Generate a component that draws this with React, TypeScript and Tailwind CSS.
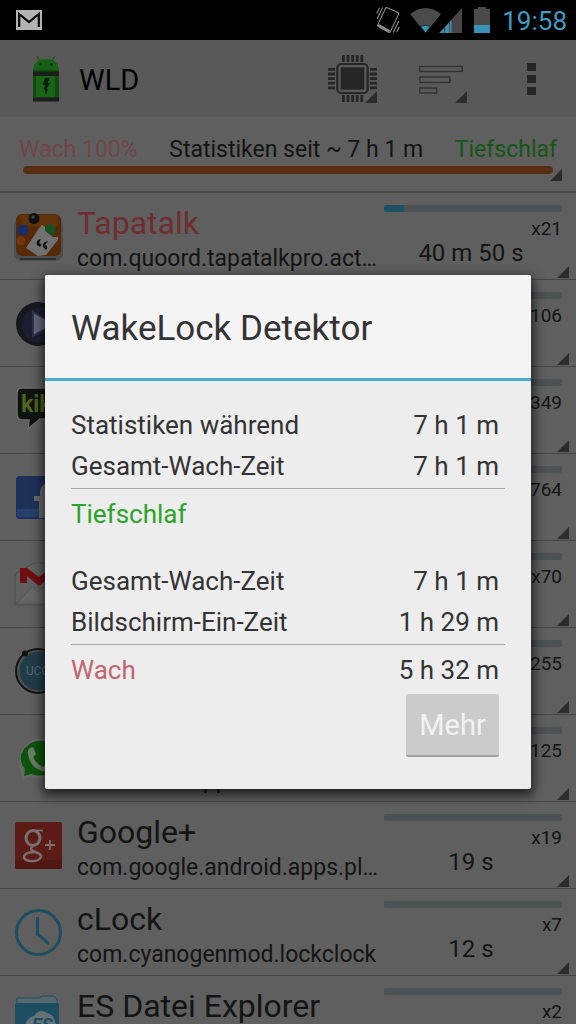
import type { ReactNode } from 'react';

function Corner({ className = '' }: { className?: string }) {
  return (
    <svg viewBox="0 0 12 12" className={`absolute size-3 ${className}`} aria-hidden="true">
      <path d="M12 0V12H0Z" fill="#2c2c2c" />
    </svg>
  );
}

function StatusBar() {
  return (
    <header className="flex h-10 shrink-0 items-center bg-black pl-4 pr-[9px]">
      <svg viewBox="0 0 26 20" className="h-5 w-[26px]">
        <rect width="26" height="20" fill="#b4b4b4" />
        <path d="M3.2 17V4L13 12L22.8 4V17" fill="none" stroke="#000" strokeWidth="2.2" />
      </svg>
      <div className="ml-auto flex items-center">
        <svg viewBox="0 0 24 28" className="mr-2.5 h-7 w-6" fill="none" stroke="#8c8c8c" strokeWidth="1.1">
          <path d="M11.2 1.800L21.800 6.600Q23 7.200 22.500 8.400L14.500 25.400Q13.800 26.800 12.600 26.200L2.400 20.600Q1.300 20 1.800 18.800L9.400 2.600Q10 1.300 11.200 1.800Z" />
          <path d="M2.200 19.200L13.500 25.300" strokeWidth="2.600" />
          <path d="M6.600 1.500L1.200 13M3.400 2L.8 7.500M22.800 15L17.300 26.500M23.200 21L20.800 26" />
        </svg>
        <svg viewBox="0 0 52 25" className="mr-3 h-[25px] w-[52px]">
          <path d="M0 6Q15.500 -6 31 6L15.500 25Z" fill="#4b4b4b" />
          <path d="M10.500 18.600Q15.500 15.800 20.500 18.600L15.500 25Z" fill="#3793b7" stroke="#000" strokeWidth=".6" />
          <path d="M52 0V25H29Z" fill="#4b4547" />
          <path d="M29.500 25L34 20.500V25ZM35.200 19L39 15V25H35.200ZM40 14L41.500 12.200V25H40Z" fill="#3793b7" />
        </svg>
        <svg viewBox="0 0 16 26" className="mr-3 h-[26px] w-4">
          <path d="M0 2H4V0H12V2H16V26H0Z" fill="#4a4a4a" />
          <path d="M0 18H16V26H0Z" fill="#3793b7" />
        </svg>
        <time className="pt-0.5 text-[26px] leading-8 text-[#3c9dc4]">19:58</time>
      </div>
    </header>
  );
}

function ActionBar() {
  return (
    <div className="flex h-[77px] shrink-0 items-center bg-[#595959] pl-[33px] pr-10">
      <svg viewBox="0 0 26 46" className="h-[46px] w-[26px]">
        <path d="M4 0L7 5M22 0L19 5" stroke="#186016" strokeWidth="1.200" />
        <path d="M0 16Q0 3 13 3Q26 3 26 16Z" fill="#186016" />
        <circle cx="7.500" cy="8.500" r="1.200" fill="#0a2b0a" />
        <circle cx="18.500" cy="8.500" r="1.200" fill="#0a2b0a" />
        <rect y="14" width="26" height="31" fill="#124b10" />
        <rect x="3" y="19" width="19" height="22" fill="#1a6317" />
        <rect y="15.500" width="26" height="4.500" fill="#1a1e1a" />
        <rect y="41.500" width="26" height="4" fill="#1a1e1a" />
        <path d="M12 22L17 21.500L14.500 27H17L13.500 33H15L12.500 39L12 33.500H10.500L12.500 29H9.500Z" fill="#0a1c0a" />
      </svg>
      <h1 className="ml-5 pt-0.5 text-[29px] leading-8 text-black">WLD</h1>
      <button type="button" aria-label="CPU" className="relative ml-auto">
        <svg viewBox="0 0 49 48" className="h-12 w-[49px]" fill="#262626">
          <path d="M14 0h2.800v7h-2.800zM18.600 0h2.800v7h-2.800zM23.200 0h2.800v7h-2.800zM27.800 0h2.800v7h-2.800zM32.400 0h2.800v7h-2.800zM14 40h2.800v7h-2.800zM18.600 40h2.800v7h-2.800zM23.200 40h2.800v7h-2.800zM27.800 40h2.800v7h-2.800zM32.400 40h2.800v7h-2.800z" />
          <path d="M0 13h7v2.800h-7zM0 17.600h7v2.800h-7zM0 22.200h7v2.800h-7zM0 26.800h7v2.800h-7zM0 31.400h7v2.800h-7zM42 13h7v2.800h-7zM42 17.600h7v2.800h-7zM42 22.200h7v2.800h-7zM42 26.800h7v2.800h-7zM42 31.400h7v2.800h-7z" />
          <rect x="9.300" y="9" width="30.400" height="29" rx="4" fill="none" stroke="#262626" strokeWidth="2.200" />
          <rect x="12.700" y="12.300" width="23.600" height="22.400" rx="1" />
          <path d="M50 33V50H33Z" fill="#595959" />
        </svg>
        <Corner className="bottom-0 right-0" />
      </button>
      <button type="button" aria-label="Sortieren" className="relative ml-[42px]">
        <svg viewBox="0 0 48 48" className="size-12" fill="none" stroke="#303030" strokeWidth="1.300">
          <rect x=".8" y="11.500" width="42.400" height="5" />
          <rect x=".8" y="22" width="30" height="5.500" />
          <rect x=".8" y="33" width="17" height="5" />
        </svg>
        <Corner className="bottom-0 right-0" />
      </button>
      <button type="button" aria-label="Optionen" className="ml-[60px]">
        <svg viewBox="0 0 9 32" className="h-8 w-[9px]" fill="#262626">
          <path d="M0 0h9v8h-9zM0 12h9v8h-9zM0 24h9v8h-9z" />
        </svg>
      </button>
    </div>
  );
}

function Summary() {
  return (
    <section className="relative h-[76px] shrink-0 border-b-2 border-[#494949] pt-[18px]">
      <div className="flex justify-between px-[19px] text-[23px] leading-[30px]">
        <span className="text-[#704448]">Wach 100%</span>
        <span className="text-[#141414]">Statistiken seit ~ 7 h 1 m</span>
        <span className="text-[#145614]">Tiefschlaf</span>
      </div>
      <div className="mx-[23px] mt-px h-2 rounded-full bg-[#592f14]" />
      <Corner className="bottom-[10px] right-[14px]" />
    </section>
  );
}

const tapatalkIcon = (
  <>
    <rect x="0" y="5" width="49" height="43" rx="8" fill="#4b4f4f" />
    <path d="M6 46H42" stroke="#202424" strokeWidth="1.500" />
    <rect x="2" y="1" width="45" height="42" rx="6" fill="#552a09" />
    <path d="M5 2H44Q46 12 40 16L8 12Z" fill="#6b3c0d" opacity=".6" />
    <circle cx="20" cy="5.500" r="5.500" fill="#111" />
    <circle cx="19" cy="4" r="1.800" fill="#444" />
    <circle cx="9" cy="17" r="5.500" fill="#172f66" />
    <circle cx="36" cy="17" r="5.500" fill="#165022" />
    <circle cx="7" cy="28" r="4.500" fill="#74350f" />
    <path d="M25 15L28 12L31 14L31 18L39 24L44 24L44 27L32 42L24 43L12 35Z" fill="#717171" />
    <path d="M27 26Q21 27 23 32L26 34Q29 31 25 30ZM34 28Q28 29 29 34L32 37Q35 33 31 32Z" fill="#101010" />
  </>
);

const playIcon = (
  <>
    <circle cx="24" cy="24" r="22" fill="#17171e" />
    <circle cx="26" cy="25" r="18" fill="#1e1e32" />
    <path d="M19 12L40 24L19 36Z" fill="#66667a" stroke="#303054" strokeWidth="2" />
  </>
);

const kikIcon = (
  <>
    <path d="M8 1H44Q48 1 48 5V28Q48 32 44 32H26L14 42L15 33H8Q3 32 3 28V6Q3 1 8 1Z" fill="#101411" stroke="#6c6c6c" strokeWidth="1.500" />
    <text x="7" y="25" fontSize="23" fontWeight="700" fill="#4f661c">kik</text>
  </>
);

const facebookIcon = (
  <>
    <rect x="2" y="2" width="45" height="43" rx="4" fill="#1e315a" />
    <path d="M3 35H46V41Q46 43 43 43H5Q2 43 3 35Z" fill="#27406c" />
    <path d="M40 9Q27 7 26 18V22H20V27H25V44H34V28H40V22H34V17Q35 14 40 15Z" fill="#6b6b6b" />
  </>
);

const gmailIcon = (
  <>
    <path d="M1 13L20 2H30L48 13V44H1Z" fill="#606060" stroke="#4c4c4c" />
    <path d="M2 43L18 26L24 31L30 26L47 43Z" fill="#656565" stroke="#555" />
    <path d="M6 7H13L25 16L37 7H43V22H37V15L25 25L13 15V22H6Z" fill="#700d10" />
  </>
);

const ucIcon = (
  <>
    <circle cx="24" cy="23" r="22" fill="#505050" stroke="#141414" strokeWidth="2" />
    <circle cx="25" cy="23" r="19.500" fill="#203c48" />
    <circle cx="11" cy="5.500" r="3" fill="#111" />
    <text x="12" y="27" fontSize="12" fill="#526a74">UCCW</text>
  </>
);

const whatsappIcon = (
  <>
    <path d="M8 46L7 36Q2 23 10 11Q18 2 31 4Q45 7 47 22Q47 35 36 41Q26 46 16 41Z" fill="#686868" />
    <path d="M10 41L11 34Q3 24 10 14Q18 4 30 6Q43 10 45 23Q44 35 34 39Q25 42 17 39Z" fill="#0d540c" />
    <path d="M16 13L19 12L22 19L19 22Q22 29 29 32L33 29L39 32Q38 37 32 37Q16 34 14 19Q13 15 16 13Z" fill="#6c7c6b" />
  </>
);

const googleIcon = (
  <>
    <rect x="1" width="47" height="47" rx="2" fill="#5c1b14" />
    <path d="M1 38H48V45Q48 47 46 47H3Q1 47 1 45Z" fill="#501811" />
    <ellipse cx="19" cy="16" rx="7" ry="7.500" fill="none" stroke="#77716f" strokeWidth="3" />
    <path d="M20 8.500H29" stroke="#77716f" strokeWidth="1.800" />
    <path d="M19 24Q15 27 19 29Q28 32 27 35Q24 40 16 39Q9 38 10 34Q12 30 21 30" fill="none" stroke="#77716f" strokeWidth="2.400" />
    <path d="M36 18V28M31 23H41" stroke="#77716f" strokeWidth="1.800" />
  </>
);

const clockIcon = (
  <g fill="none" stroke="#1c4e62" strokeWidth="3">
    <circle cx="24.500" cy="23.500" r="22" />
    <path d="M23.500 8V25L35 35" />
  </g>
);

const esIcon = (
  <>
    <path d="M3 2H25L28 0H40L43 3V12H3Z" fill="#566870" stroke="#1c4e62" />
    <path d="M1 9Q1 7 3 7H43Q45 7 45 9V48H1Z" fill="#1d4d60" />
    <path d="M11 31Q12 22 20 20Q26 12 33 17Q42 19 42 33V48H11Z" fill="#667278" />
    <text x="18" y="35" fontSize="18" fontWeight="700" fontStyle="italic" fill="#1d4d60">ES</text>
  </>
);

type App = {
  icon: ReactNode;
  name?: string;
  pkg?: string;
  count: string;
  time?: string;
  hot?: boolean;
};

const apps: App[] = [
  { icon: tapatalkIcon, name: 'Tapatalk', pkg: 'com.quoord.tapatalkpro.act…', count: 'x21', time: '40 m 50 s', hot: true },
  { icon: playIcon, count: 'x106' },
  { icon: kikIcon, count: 'x349' },
  { icon: facebookIcon, count: 'x764' },
  { icon: gmailIcon, count: 'x70' },
  { icon: ucIcon, count: 'x255' },
  { icon: whatsappIcon, name: 'WhatsApp', pkg: 'com.whatsapp', count: 'x125' },
  { icon: googleIcon, name: 'Google+', pkg: 'com.google.android.apps.pl…', count: 'x19', time: '19 s' },
  { icon: clockIcon, name: 'cLock', pkg: 'com.cyanogenmod.lockclock', count: 'x7', time: '12 s' },
  { icon: esIcon, name: 'ES Datei Explorer', count: 'x2' },
];

function AppRow({ app }: { app: App }) {
  return (
    <li className="relative flex h-[87px] shrink-0 border-b border-[#444] px-[14px]">
      <svg viewBox="0 0 48 48" className="mt-5 size-12 shrink-0 overflow-visible">
        {app.icon}
      </svg>
      <div className="ml-[15px] min-w-0 flex-1 whitespace-nowrap pt-3">
        <h2 className={`h-9 text-[32px] leading-9 ${app.hot ? 'text-[#702c2e]' : 'text-[#141414]'}`}>{app.name}</h2>
        <p className="mt-1 text-[23px] leading-7 text-[#141414]">{app.pkg}</p>
      </div>
      <div className="w-[178px] shrink-0 pt-3 text-[#141414]">
        <div className="h-[7px] overflow-hidden rounded-xs bg-[#4c5151]">
          {app.hot && <div className="h-full w-5 rounded-xs bg-[#1e5166]" />}
        </div>
        <p className="mt-[6px] text-right text-[19px] leading-[22px]">{app.count}</p>
        <p className="pr-1 text-center text-[24px] leading-[26px]">{app.time}</p>
      </div>
      <Corner className="bottom-px right-[7px]" />
    </li>
  );
}

function Stat({ label, value, tone = '' }: { label: string; value?: string; tone?: string }) {
  return (
    <div className="flex h-[41px] items-center justify-between pr-[6px]">
      <dt className={tone}>{label}</dt>
      {value && <dd>{value}</dd>}
    </div>
  );
}

function StatsDialog() {
  return (
    <div className="absolute inset-x-0 bottom-0 top-10 flex items-center px-[45px]">
      <div
        role="dialog"
        aria-labelledby="dialog-title"
        className="w-full overflow-hidden rounded-xs bg-[#ededed] text-[#333] shadow-[0_4px_12px_2px_rgba(0,0,0,0.7)]"
      >
        <div className="flex h-[106px] items-center border-b-3 border-[#4aabcd] bg-[#f4f4f4] px-[26px] pt-1">
          <h2 id="dialog-title" className="text-[35px] leading-10">WakeLock Detektor</h2>
        </div>
        <div className="flex flex-col px-[26px] pb-8 pt-[23px] text-[26px] leading-8">
          <dl>
            <Stat label="Statistiken während" value="7 h 1 m" />
            <Stat label="Gesamt-Wach-Zeit" value="7 h 1 m" />
            <div className="mb-1 mt-[2px] border-t border-[#aaa]" />
            <Stat label="Tiefschlaf" tone="text-[#2aa52a]" />
          </dl>
          <dl className="mt-[26px]">
            <Stat label="Gesamt-Wach-Zeit" value="7 h 1 m" />
            <Stat label="Bildschirm-Ein-Zeit" value="1 h 29 m" />
            <div className="mb-1 mt-[2px] border-t border-[#aaa]" />
            <Stat label="Wach" value="5 h 32 m" tone="text-[#bf6672]" />
          </dl>
          <button
            type="button"
            className="mr-[6px] mt-1 h-[63px] w-[93px] self-end rounded-xs border-b-2 border-[#a0a0a0] bg-[#cbcbcb] text-[29px] text-[#f2f2f2]"
          >
            Mehr
          </button>
        </div>
      </div>
    </div>
  );
}

export default function App() {
  return (
    <div className="relative flex h-screen flex-col overflow-hidden bg-[#5f5f5f] font-['Roboto',sans-serif]">
      <StatusBar />
      <ActionBar />
      <Summary />
      <ul className="flex min-h-0 flex-1 flex-col overflow-hidden">
        {apps.map((app, i) => (
          <AppRow key={i} app={app} />
        ))}
      </ul>
      <StatsDialog />
    </div>
  );
}
